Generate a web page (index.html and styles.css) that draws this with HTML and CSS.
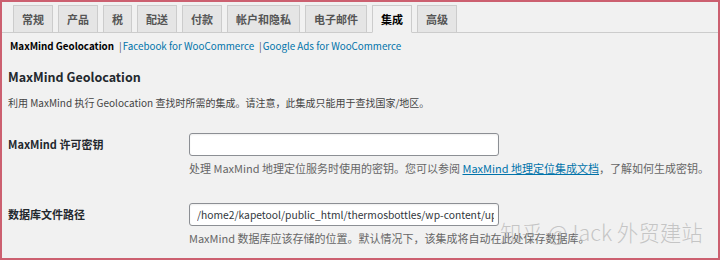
FILE: index.html
```html
<!DOCTYPE html>
<html lang="zh-CN">
<head>
    <meta charset="UTF-8">
    <meta name="viewport" content="width=device-width, initial-scale=1.0">
    <title>集成设置</title>
    <link rel="stylesheet" href="styles.css">
</head>
<body>
    <nav class="nav-tabs">
        <a class="nav-tab" href="#">常规</a>
        <a class="nav-tab" href="#">产品</a>
        <a class="nav-tab" href="#">税</a>
        <a class="nav-tab" href="#">配送</a>
        <a class="nav-tab" href="#">付款</a>
        <a class="nav-tab" href="#">帐户和隐私</a>
        <a class="nav-tab" href="#">电子邮件</a>
        <a class="nav-tab nav-tab-active" href="#">集成</a>
        <a class="nav-tab" href="#">高级</a>
    </nav>

    <div class="wrap">
        <ul class="subsubsub">
            <li><a class="current" href="#">MaxMind Geolocation</a></li>
            <li><span class="sep">|</span><a href="#">Facebook for WooCommerce</a></li>
            <li><span class="sep">|</span><a href="#">Google Ads for WooCommerce</a></li>
        </ul>

        <h2 class="section-title">MaxMind Geolocation</h2>
        <p class="intro">利用 MaxMind 执行 Geolocation 查找时所需的集成。请注意，此集成只能用于查找国家/地区。</p>

        <div class="form-row">
            <label class="field-label" for="license-key">MaxMind 许可密钥</label>
            <div class="field">
                <input class="text-input" id="license-key" type="text" value="">
                <p class="description">处理 MaxMind 地理定位服务时使用的密钥。您可以参阅 <a href="#">MaxMind 地理定位集成文档</a>，了解如何生成密钥。</p>
            </div>
        </div>

        <div class="form-row">
            <label class="field-label" for="db-path">数据库文件路径</label>
            <div class="field">
                <input class="text-input" id="db-path" type="text" value="/home2/kapetool/public_html/thermosbottles/wp-content/up" readonly>
                <p class="description">MaxMind 数据库应该存储的位置。默认情况下，该集成将自动在此处保存数据库。</p>
            </div>
        </div>
    </div>

    <!-- watermark over the bottom right corner -->
    <div class="watermark">知乎 @Jack 外贸建站</div>
</body>
</html>
```

FILE: styles.css
```css
html {
    margin: 0;
    padding: 0;
}
body {
    position: relative;
    box-sizing: border-box;
    width: 720px;
    height: 260px;
    margin: 0;
    padding: 0;
    overflow: hidden;
    background-color: #f1f1f1;
    border: 2px solid #cc6070;
    font-family: "Noto Sans CJK SC", "Noto Sans", sans-serif;
    color: #23282d;
}
a {
    text-decoration: none;
}
.nav-tabs {
    display: flex;
    align-items: flex-end;
    gap: 5px;
    padding: 3px 0 0 11px;
    border-bottom: 1px solid #ccc;
}
.nav-tab {
    box-sizing: border-box;
    height: 28px;
    margin-bottom: -1px;
    padding: 0 8px;
    border: 1px solid #ccc;
    background-color: #e5e5e5;
    color: #555;
    font-size: 11px;
    font-weight: 700;
    line-height: 26px;
}
.nav-tab-active {
    background-color: #f1f1f1;
    border-bottom-color: #f1f1f1;
    color: #000;
}
.wrap {
    padding: 0 6px;
}
.subsubsub {
    display: flex;
    margin: 5px 0 0 2px;
    padding: 0;
    list-style: none;
    font-size: 9.8px;
    line-height: 16px;
}
.subsubsub a {
    color: #0073aa;
}
.subsubsub a.current {
    color: #000;
    font-weight: 700;
}
.sep {
    margin: 0 1px 0 5px;
    color: #555;
}
.section-title {
    margin: 13px 0 0;
    font-size: 12.5px;
    font-weight: 700;
    line-height: 20px;
}
.intro {
    margin: 8px 0 0;
    color: #444;
    font-size: 10px;
    line-height: 16px;
}
.form-row {
    display: grid;
    grid-template-columns: 181px 1fr;
    margin-top: 22px;
}
.form-row + .form-row {
    margin-top: 27px;
}
.field-label {
    font-size: 11px;
    font-weight: 700;
    line-height: 23px;
}
.text-input {
    box-sizing: border-box;
    display: block;
    width: 310px;
    height: 23px;
    margin: 0;
    padding: 0 4px 0 7px;
    border: 1px solid #8c8f94;
    border-radius: 3px;
    background: #fff;
    box-shadow: inset 0 1px 2px rgba(0, 0, 0, 0.07);
    color: #32373c;
    font-family: "Noto Sans CJK SC", "Noto Sans", sans-serif;
    font-size: 10.3px;
}
.description {
    margin: 4px 0 0;
    color: #666;
    font-size: 11px;
    line-height: 16px;
    white-space: nowrap;
}
.description a {
    color: #0073aa;
    text-decoration: underline;
}
.watermark {
    position: absolute;
    left: 498px;
    top: 216px;
    color: rgba(160, 160, 160, 0.55);
    font-size: 21.5px;
    font-weight: 300;
    line-height: 28px;
    white-space: nowrap;
}
```
